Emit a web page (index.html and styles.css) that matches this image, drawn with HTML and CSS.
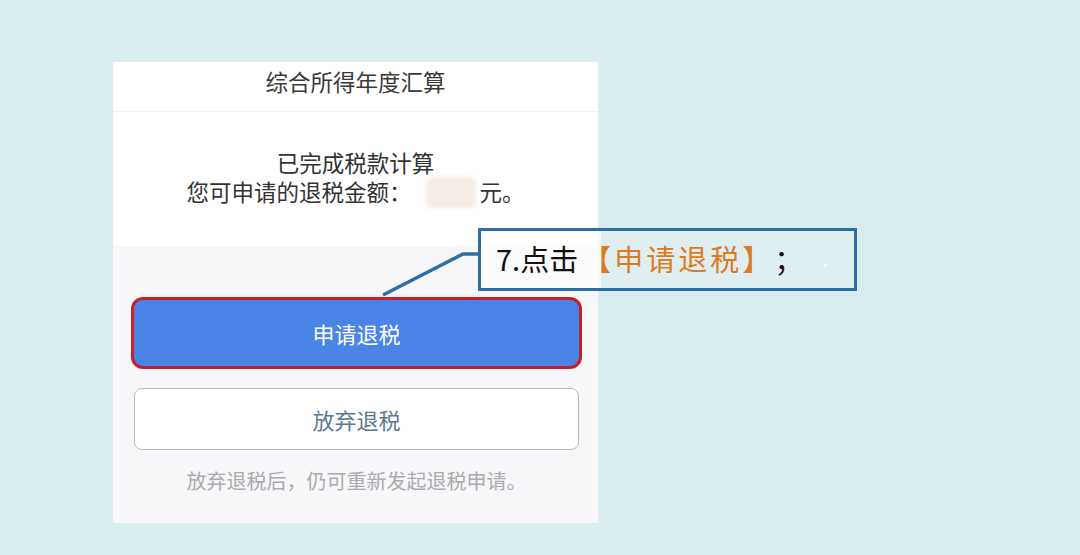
FILE: index.html
```html
<!DOCTYPE html>
<html lang="zh-CN">

<head>
    <meta charset="UTF-8">
    <meta name="viewport" content="width=device-width, initial-scale=1.0">
    <title>综合所得年度汇算</title>
    <link rel="stylesheet" href="styles.css">
</head>

<body>
    <div class="stage">
        <div class="card">
            <div class="card-header">综合所得年度汇算</div>

            <div class="card-body">
                <p>已完成税款计算</p>
                <p>您可申请的退税金额：<span class="amount"></span>元。</p>
            </div>

            <div class="card-actions">
                <button class="btn btn-primary">申请退税</button>
                <button class="btn btn-plain">放弃退税</button>
                <div class="hint">放弃退税后，仍可重新发起退税申请。</div>
            </div>
        </div>

        <svg class="leader" width="1080" height="555" viewBox="0 0 1080 555">
            <polyline points="383,295 463,254 480,254" fill="none" stroke="#2b6fa6" stroke-width="3.5" />
        </svg>

        <div class="callout">
            7.点击<span class="hl">【申请退税】</span>；<span class="dot">·</span>
        </div>
    </div>
</body>

</html>
```

FILE: styles.css
```css
* {
    box-sizing: border-box;
}

body {
    font-family: 'Noto Sans CJK SC', 'Noto Sans', sans-serif;
    background-color: #d9ecee;
    color: #333;
    margin: 0;
    width: 1080px;
    height: 555px;
    overflow: hidden;
}

.stage {
    position: relative;
    width: 1080px;
    height: 555px;
    padding: 62px 0 0 113px;
}

.card {
    width: 485px;
    height: 461px;
    background-color: #f7f7fa;
    display: flex;
    flex-direction: column;
}

.card-header {
    height: 50px;
    line-height: 38px;
    font-size: 22.5px;
    text-align: center;
    color: #3a3a3a;
    background-color: #fff;
    border-bottom: 1px solid #eef0f2;
}

.card-body {
    height: 134px;
    padding-top: 36px;
    background-color: #fff;
    text-align: center;
    font-size: 22.5px;
    color: #333;
}

.card-body p {
    margin: 0;
    line-height: 29px;
}

.amount {
    display: inline-block;
    width: 50px;
    height: 31px;
    margin: 0 4px 0 14px;
    vertical-align: -7px;
    background-color: #f3ebe4;
    border-radius: 6px;
    filter: blur(2px);
}

.card-actions {
    flex: 1;
    display: flex;
    flex-direction: column;
    padding: 54px 19px 0 21px;
}

.btn {
    font-family: inherit;
    font-size: 22px;
    cursor: pointer;
}

.btn-primary {
    height: 66px;
    border: none;
    border-radius: 9px;
    background-color: #4a84e6;
    color: #fff;
    box-shadow: 0 0 0 3px #c8202b;
}

.btn-plain {
    margin-top: 22px;
    height: 62px;
    border: 1px solid #b9bcc0;
    border-radius: 8px;
    background-color: #fff;
    color: #5c7892;
}

.hint {
    margin-top: 16px;
    text-align: center;
    font-size: 20px;
    color: #a9abad;
}

.leader {
    position: absolute;
    left: 0;
    top: 0;
    pointer-events: none;
}

.callout {
    position: absolute;
    left: 478px;
    top: 228px;
    width: 379px;
    height: 63px;
    border: 3px solid #2b6fa6;
    padding-left: 15px;
    line-height: 54px;
    font-size: 29px;
    color: #111;
    white-space: nowrap;
    text-spacing-trim: space-all;
    background: linear-gradient(to right, rgba(255, 255, 255, 0.7) 120px, rgba(255, 255, 255, 0.15) 120px);
}

.hl {
    color: #e07a20;
    letter-spacing: 3px;
    margin-left: 4px;
}

.dot {
    margin-left: 14px;
    color: #fff;
    font-size: 16px;
}
```
